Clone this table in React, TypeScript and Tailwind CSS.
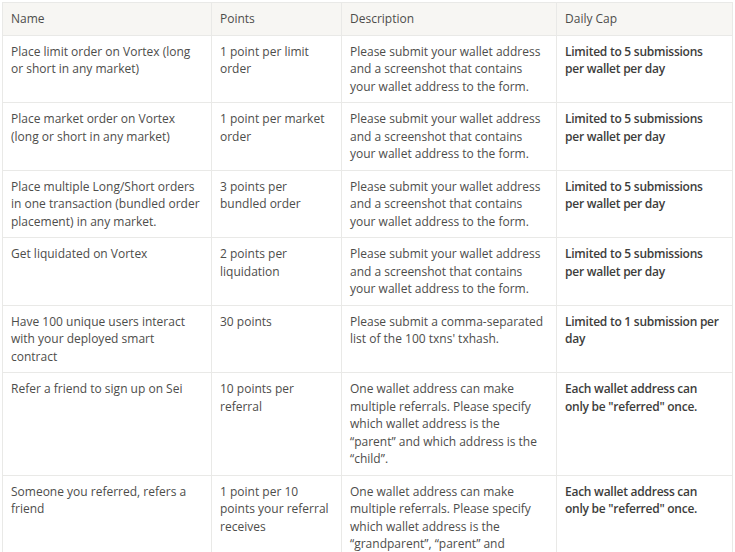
import type { ReactNode } from "react"

type Row = { name: string; points: string; description: ReactNode; cap: string }

const rows: Row[] = [
  {
    name: "Place limit order on Vortex (long or short in any market)",
    points: "1 point per limit order",
    description: "Please submit your wallet address and a screenshot that contains your wallet address to the form.",
    cap: "Limited to 5 submissions per wallet per day",
  },
  {
    name: "Place market order on Vortex (long or short in any market)",
    points: "1 point per market order",
    description: "Please submit your wallet address and a screenshot that contains your wallet address to the form.",
    cap: "Limited to 5 submissions per wallet per day",
  },
  {
    name: "Place multiple Long/Short orders in one transaction (bundled order placement) in any market.",
    points: "3 points per bundled order",
    description: "Please submit your wallet address and a screenshot that contains your wallet address to the form.",
    cap: "Limited to 5 submissions per wallet per day",
  },
  {
    name: "Get liquidated on Vortex",
    points: "2 points per liquidation",
    description: "Please submit your wallet address and a screenshot that contains your wallet address to the form.",
    cap: "Limited to 5 submissions per wallet per day",
  },
  {
    name: "Have 100 unique users interact with your deployed smart contract",
    points: "30 points",
    description: "Please submit a comma-separated list of the 100 txns' txhash.",
    cap: "Limited to 1 submission per day",
  },
  {
    name: "Refer a friend to sign up on Sei",
    points: "10 points per referral",
    description:
      "One wallet address can make multiple referrals. Please specify which wallet address is the \u201cparent\u201d and which address is the \u201cchild\u201d.",
    cap: "Each wallet address can only\u00a0be \"referred\" once.",
  },
  {
    name: "Someone you referred, refers a friend",
    points: "1 point per 10 points your referral receives",
    description: (
      <>
        One wallet address can make multiple referrals. Please specify which wallet address is the
        {" \u201cgrandparent\u201d, \u201cparent\u201d and"}
        <br />
        {"\u201cchild\u201d."}
      </>
    ),
    cap: "Each wallet address can only\u00a0be \"referred\" once.",
  },
]

export default function App() {
  const cell = "border border-[#e9e9e7] align-top px-[8px] pt-[7px] pb-[7px] text-left"

  return (
    <div className="pt-[2px] pl-[2px] bg-white font-['Open_Sans',sans-serif] text-[12px] leading-[17.5px] text-[#4d4d4b]">
      <table className="border-collapse table-fixed w-[730px]">
        <colgroup>
          <col className="w-[209px]" />
          <col className="w-[130px]" />
          <col className="w-[215px]" />
          <col className="w-[176px]" />
        </colgroup>
        <thead>
          <tr className="bg-[#f7f6f3]">
            {["Name", "Points", "Description", "Daily Cap"].map((h) => (
              <th key={h} className="border border-[#e9e9e7] px-[8px] pt-[7px] pb-[7px] text-left font-normal text-[#4d4d4b]">
                {h}
              </th>
            ))}
          </tr>
        </thead>
        <tbody>
          {rows.map((r, i) => (
            <tr key={i}>
              <td className={cell}>{r.name}</td>
              <td className={cell}>{r.points}</td>
              <td className={cell}>{r.description}</td>
              <td className={cell + " font-semibold tracking-[-0.25px] text-[#3d3d3b]"}>{r.cap}</td>
            </tr>
          ))}
        </tbody>
      </table>
    </div>
  )
}
